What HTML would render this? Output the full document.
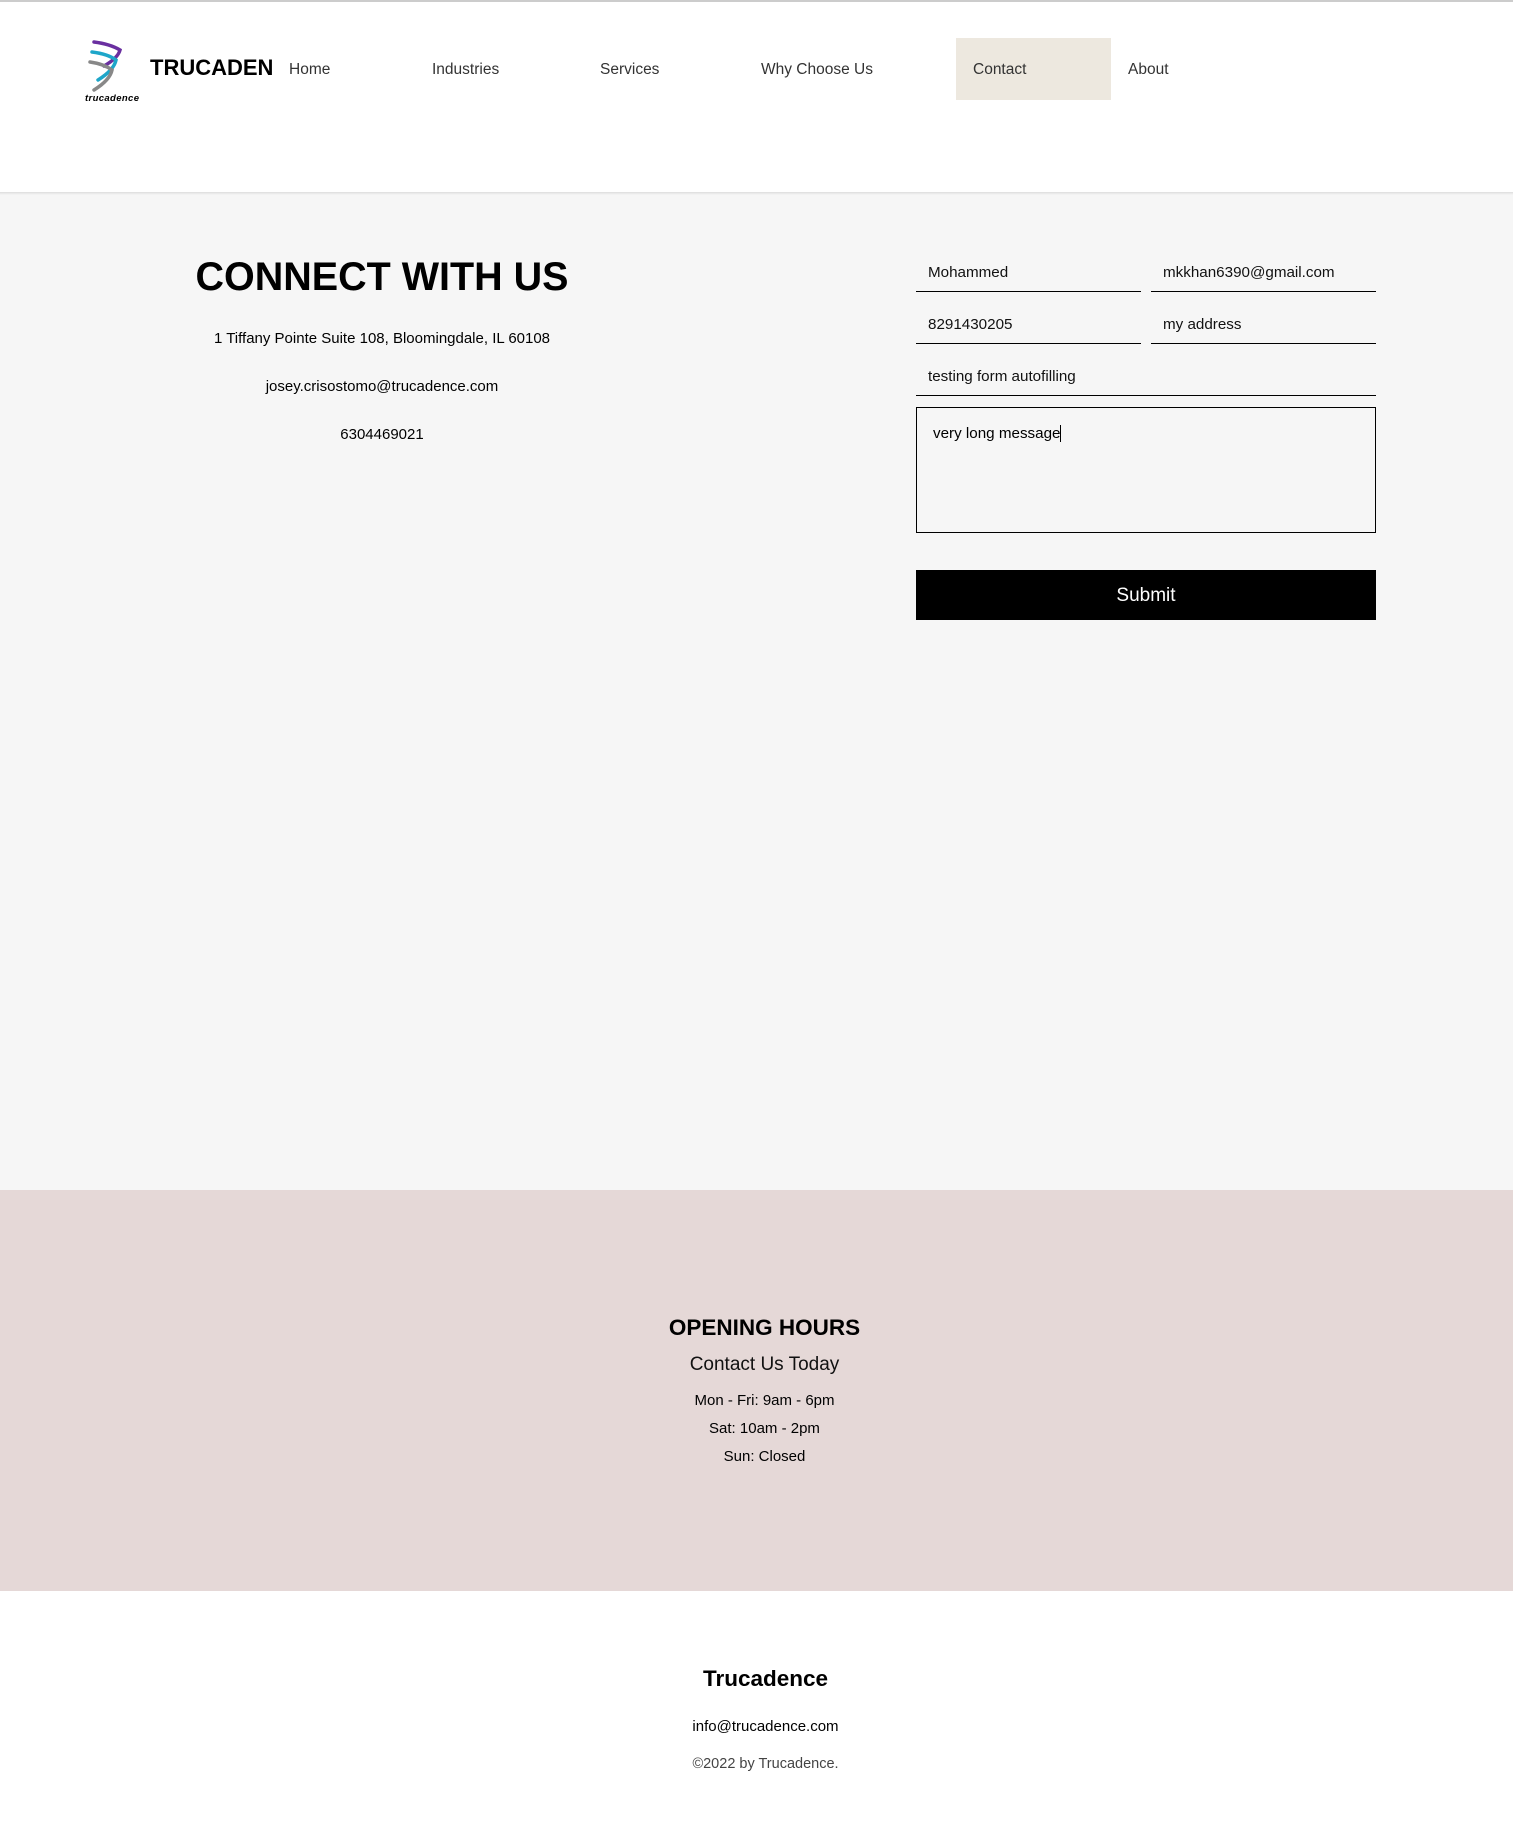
<!DOCTYPE html>
<html><head><meta charset="utf-8"><style>
*{margin:0;padding:0;box-sizing:border-box}
body{width:1513px;height:1842px;position:relative;background:#fff;font-family:"Liberation Sans",Arial,sans-serif;color:#000;overflow:hidden}
.a{position:absolute;white-space:nowrap}
.c{position:absolute;left:8px;width:100%;text-align:center;white-space:nowrap}
.nav{font-size:15.5px;color:#333;top:61px}
.in{position:absolute;border-bottom:1.5px solid #000;height:43px}
.in span{position:absolute;left:12px;top:15px;font-size:15.2px;color:#111}
</style></head><body>
<div class="a" style="left:0;top:0;width:1513px;height:2px;background:#ccc"></div>
<div class="a" style="left:0;top:194px;width:1513px;height:1000px;background:#f6f6f6"></div>
<div class="a" style="left:0;top:192px;width:1513px;height:3px;background:linear-gradient(#ddd,#f6f6f6)"></div>
<svg class="a" style="left:84px;top:38px" width="58" height="66" viewBox="0 0 58 66">
<path d="M10 4 Q26 6 36 12 Q34 20 20 28" stroke="#6a2fa0" stroke-width="3.5" fill="none" stroke-linecap="round"/>
<path d="M8 14 Q24 16 32 22 Q30 32 14 42" stroke="#1ea6c9" stroke-width="3.5" fill="none" stroke-linecap="round"/>
<path d="M6 24 Q20 26 28 32 Q26 42 10 52" stroke="#888" stroke-width="3.5" fill="none" stroke-linecap="round"/>
<text x="1" y="63" font-family="Liberation Sans" font-style="italic" font-weight="bold" font-size="9.5" textLength="54">trucadence</text>
</svg>
<div class="a" style="left:150px;top:55px;font-size:22px;font-weight:bold">TRUCADEN</div>
<div class="a nav" style="left:289px">Home</div>
<div class="a nav" style="left:432px">Industries</div>
<div class="a nav" style="left:600px">Services</div>
<div class="a nav" style="left:761px">Why Choose Us</div>
<div class="a" style="left:956px;top:38px;width:155px;height:62px;background:#ede8df"></div>
<div class="a nav" style="left:973px">Contact</div>
<div class="a nav" style="left:1128px">About</div>

<div class="a" style="left:0;width:764px;text-align:center;top:255px;font-size:39.5px;font-weight:bold">CONNECT WITH US</div>
<div class="a" style="left:0;width:764px;text-align:center;top:330px;font-size:15px">1 Tiffany Pointe Suite 108, Bloomingdale, IL 60108</div>
<div class="a" style="left:0;width:764px;text-align:center;top:378px;font-size:15px">josey.crisostomo@trucadence.com</div>
<div class="a" style="left:0;width:764px;text-align:center;top:426px;font-size:15px">6304469021</div>

<div class="in" style="left:916px;top:249px;width:225px"><span>Mohammed</span></div>
<div class="in" style="left:1151px;top:249px;width:225px"><span>mkkhan6390@gmail.com</span></div>
<div class="in" style="left:916px;top:301px;width:225px"><span>8291430205</span></div>
<div class="in" style="left:1151px;top:301px;width:225px"><span>my address</span></div>
<div class="in" style="left:916px;top:353px;width:460px"><span>testing form autofilling</span></div>
<div class="a" style="left:916px;top:407px;width:460px;height:126px;border:1.5px solid #000"><span style="position:absolute;left:16px;top:17px;font-size:15.2px;border-right:1px solid #000">very long message</span></div>
<div class="a" style="left:916px;top:570px;width:460px;height:50px;background:#000;color:#fff;text-align:center;line-height:52px;font-size:19px">Submit</div>

<div class="a" style="left:0;top:1190px;width:1513px;height:401px;background:#e5d8d7"></div>
<div class="c" style="top:1315px;font-size:22.5px;font-weight:bold">OPENING HOURS</div>
<div class="c" style="top:1354px;font-size:19px;color:#111">Contact Us Today</div>
<div class="c" style="top:1392px;font-size:15px">Mon - Fri: 9am - 6pm</div>
<div class="c" style="top:1420px;font-size:15px">Sat: 10am - 2pm</div>
<div class="c" style="top:1448px;font-size:15px">Sun: Closed</div>

<div class="c" style="left:9px;top:1666px;font-size:22.5px;font-weight:bold">Trucadence</div>
<div class="c" style="left:9px;top:1718px;font-size:15px">info@trucadence.com</div>
<div class="c" style="left:9px;top:1756px;font-size:14.5px;color:#444">©2022 by Trucadence.</div>
</body></html>
